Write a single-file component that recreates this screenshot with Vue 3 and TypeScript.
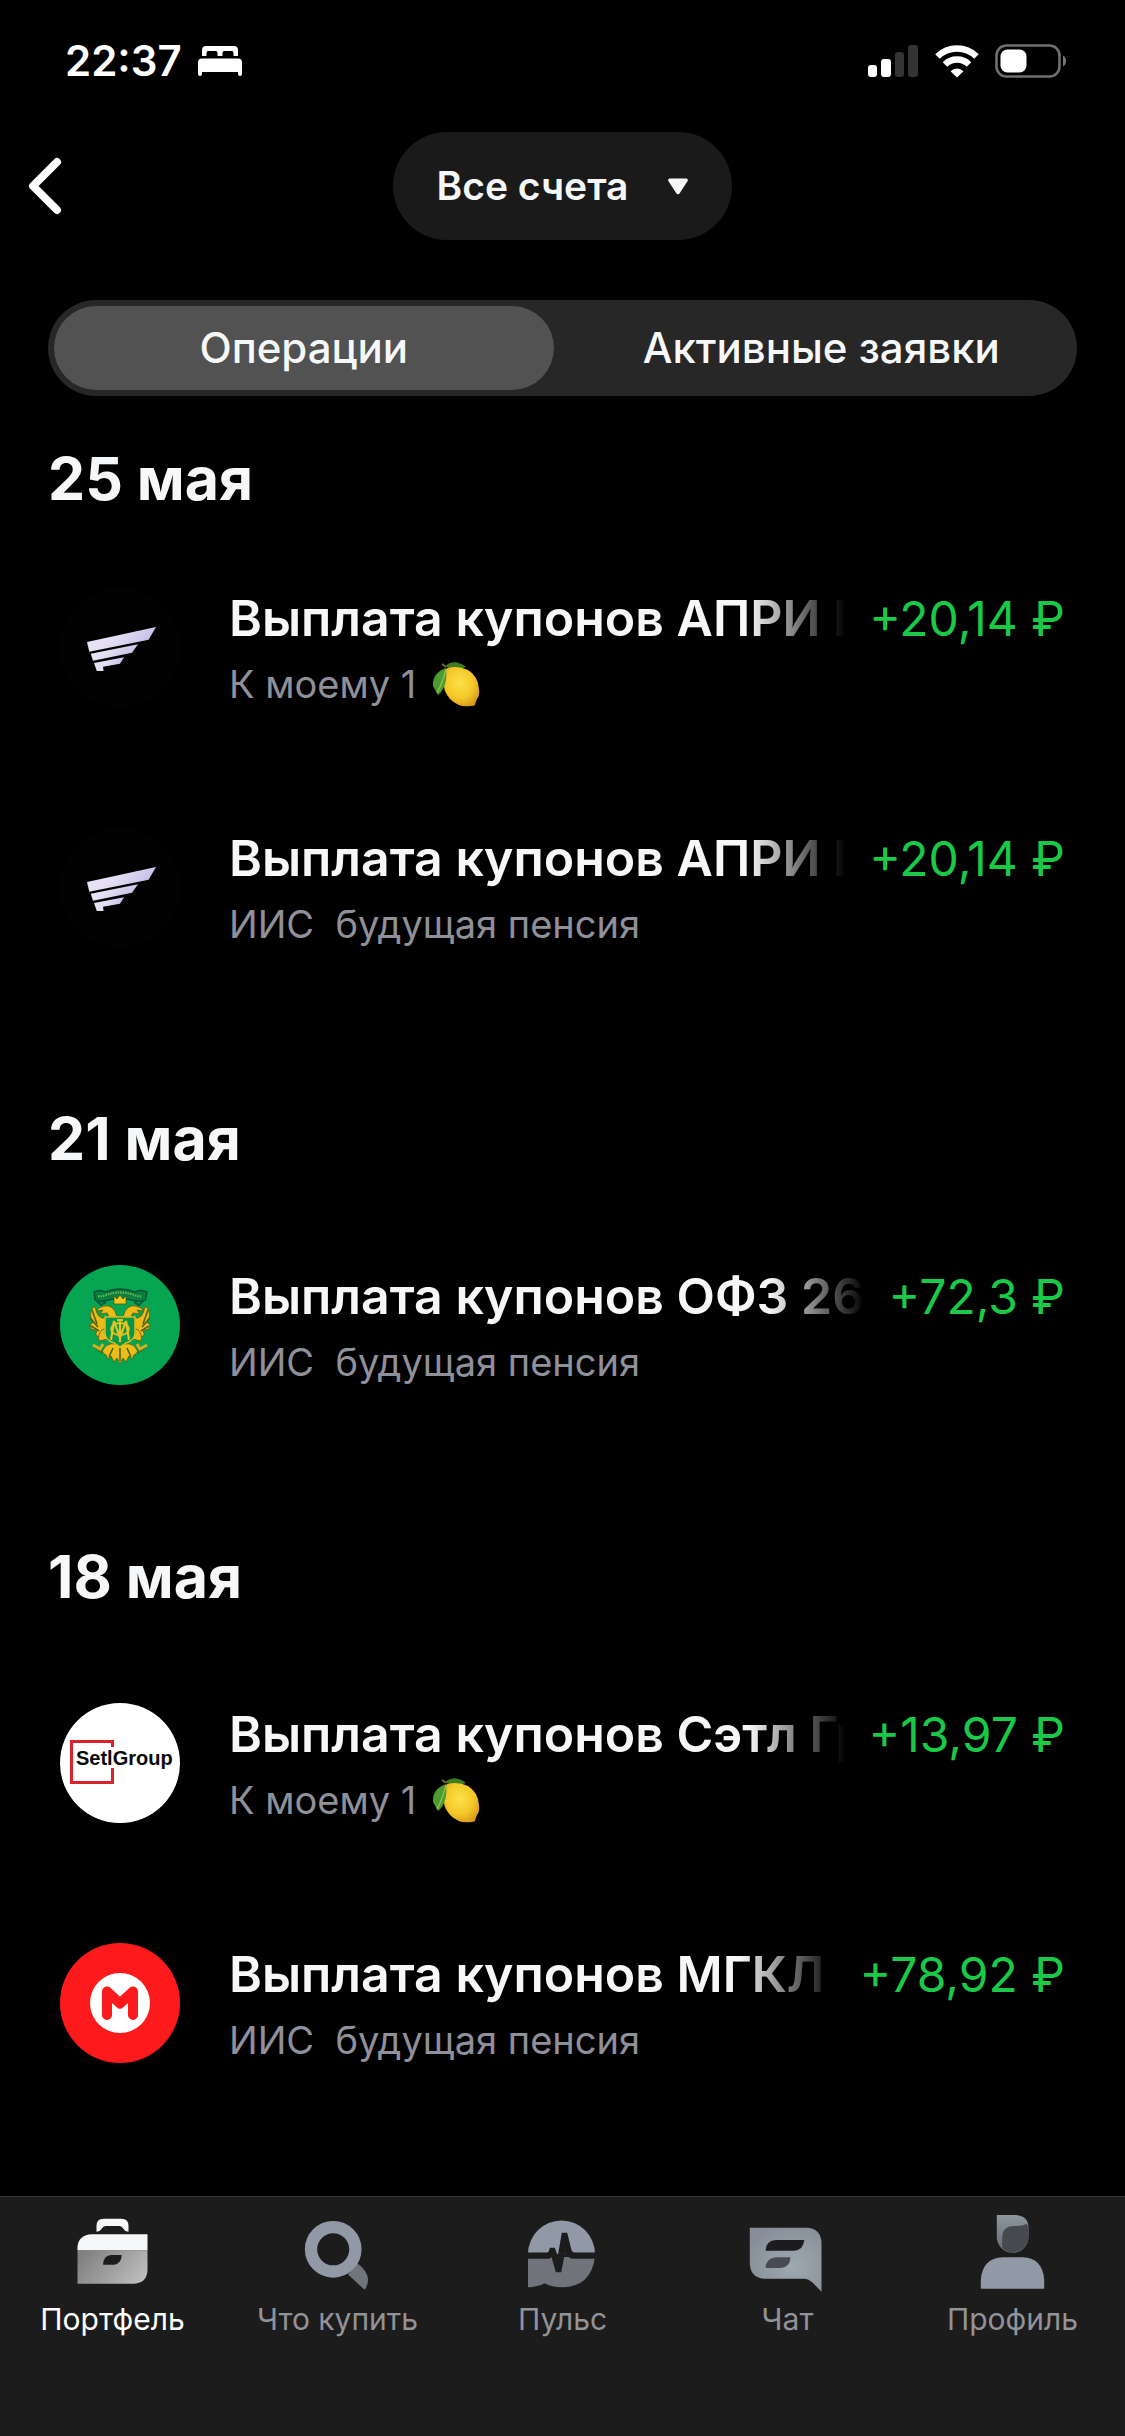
<script setup lang="ts">
import { ref } from 'vue'

type Logo = 'apri' | 'ofz' | 'setl' | 'mgkl'

interface Operation {
  id: number
  logo: Logo
  title: string
  account: string
  lemon?: boolean
  amount: string
}

interface Day {
  date: string
  operations: Operation[]
}

const days: Day[] = [
  {
    date: '25 мая',
    operations: [
      { id: 1, logo: 'apri', title: 'Выплата купонов АПРИ Б', account: 'К моему 1', lemon: true, amount: '+20,14 ₽' },
      { id: 2, logo: 'apri', title: 'Выплата купонов АПРИ Б', account: 'ИИС  будущая пенсия', amount: '+20,14 ₽' },
    ],
  },
  {
    date: '21 мая',
    operations: [
      { id: 3, logo: 'ofz', title: 'Выплата купонов ОФЗ 26', account: 'ИИС  будущая пенсия', amount: '+72,3 ₽' },
    ],
  },
  {
    date: '18 мая',
    operations: [
      { id: 4, logo: 'setl', title: 'Выплата купонов Сэтл Гр', account: 'К моему 1', lemon: true, amount: '+13,97 ₽' },
      { id: 5, logo: 'mgkl', title: 'Выплата купонов МГКЛ 0', account: 'ИИС  будущая пенсия', amount: '+78,92 ₽' },
    ],
  },
]

const views = ['Операции', 'Активные заявки']
const activeView = ref(views[0])

const tabs = [
  { id: 'portfolio', label: 'Портфель' },
  { id: 'buy', label: 'Что купить' },
  { id: 'pulse', label: 'Пульс' },
  { id: 'chat', label: 'Чат' },
  { id: 'profile', label: 'Профиль' },
]
const activeTab = ref('portfolio')
</script>

<template>
  <div class="screen">
    <div class="status">
      <div class="status-left">
        <span class="clock">22:37</span>
        <svg class="bed" width="44" height="32" viewBox="0 0 44 32" aria-hidden="true">
          <path fill="#fff" d="M4 11V5a4 4 0 0 1 4-4H36a4 4 0 0 1 4 4v6h-4.500V8a2 2 0 0 0-2-2h-7a2 2 0 0 0-2 2v3h-5V8a2 2 0 0 0-2-2h-7a2 2 0 0 0-2 2v3z" />
          <path fill="#fff" d="M4 13.500H40a4 4 0 0 1 4 4V29a2 2 0 0 1-4 0V27H4v2a2 2 0 0 1-4 0V17.500a4 4 0 0 1 4-4z" />
        </svg>
      </div>
      <div class="status-right">
        <svg width="52" height="34" viewBox="0 0 52 34" aria-hidden="true">
          <rect x="1" y="21" width="9" height="12" rx="3" fill="#fff" />
          <rect x="14" y="15" width="10" height="18" rx="3" fill="#fff" />
          <rect x="28" y="8" width="9" height="25" rx="3" fill="#343434" />
          <rect x="41" y="1" width="10" height="32" rx="3" fill="#343434" />
        </svg>
        <svg width="44" height="34" viewBox="0 0 44 34" aria-hidden="true">
          <g fill="none" stroke="#fff" stroke-width="6.500">
            <path d="M2.500 12.500a28 28 0 0 1 39 0" />
            <path d="M10 20.500a17 17 0 0 1 24 0" />
          </g>
          <path fill="#fff" d="M22 33.500l-6.500-6.300a9 9 0 0 1 13 0z" />
        </svg>
        <svg width="72" height="34" viewBox="0 0 72 34" aria-hidden="true">
          <rect x="1.500" y="1.500" width="63" height="31" rx="10" fill="none" stroke="#6f6f6f" stroke-width="2.600" />
          <rect x="5.500" y="5.500" width="26" height="23" rx="7" fill="#fff" />
          <path fill="#777" d="M68 11.500a6.500 6.500 0 0 1 0 11z" />
        </svg>
      </div>
    </div>

    <header class="top">
      <button class="back" type="button" aria-label="Назад">
        <svg width="34" height="58" viewBox="0 0 34 58" aria-hidden="true">
          <path d="M29 5L5 29l24 24" fill="none" stroke="#fff" stroke-width="8" stroke-linecap="round" stroke-linejoin="round" />
        </svg>
      </button>
      <button class="account-picker" type="button" aria-haspopup="listbox">
        <span>Все счета</span>
        <svg width="20" height="17" viewBox="0 0 20 17" aria-hidden="true">
          <path fill="#f6f7f8" d="M2 0.500H18a1.700 1.700 0 0 1 1.500 2.700L11.500 15.500a1.800 1.800 0 0 1-3 0L0.500 3.200A1.700 1.700 0 0 1 2 0.500z" />
        </svg>
      </button>
    </header>

    <div class="segments" role="tablist">
      <button
        v-for="view in views"
        :key="view"
        class="segment"
        :class="{ active: view === activeView }"
        type="button"
        role="tab"
        :aria-selected="view === activeView"
        @click="activeView = view"
      >{{ view }}</button>
    </div>

    <main class="feed">
      <section v-for="day in days" :key="day.date" class="day">
        <h2>{{ day.date }}</h2>
        <ul>
          <li v-for="op in day.operations" :key="op.id" class="operation">
            <svg class="logo" width="120" height="120" viewBox="0 0 120 120" aria-hidden="true">
              <template v-if="op.logo === 'apri'">
                <defs>
                  <linearGradient :id="'wing' + op.id" x1="0" y1="0" x2="1" y2=".35">
                    <stop offset="0" stop-color="#eee9f6" />
                    <stop offset=".5" stop-color="#e3def2" />
                    <stop offset="1" stop-color="#c5bfe8" />
                  </linearGradient>
                </defs>
                <circle cx="60" cy="60" r="60" fill="#020202" />
                <g :fill="'url(#wing' + op.id + ')'">
                  <path d="M27 55L96 40 88.600 52.700 29.300 64.700z" />
                  <path d="M30.700 66.700L78 57.300 72 65.700 33 73.700z" />
                  <path d="M34 76L64 70.300 60 76.700 43 79.700 43.600 84H36.800z" />
                </g>
              </template>
              <template v-else-if="op.logo === 'ofz'">
                <circle cx="60" cy="60" r="60" fill="#05a551" />
                <path d="M34 27q6-3 11 0 15-6 30 0 5-3 12 0l-1.500 8q-5 2-10.500 1-15-5-30 0-5 1-10-1z" fill="#07803f" stroke="#064f35" stroke-width="1.300" />
                <path d="M38 31q4 1 8-1 14-5 28 0 4 2 8 1" fill="none" stroke="#73b84a" stroke-width="2" stroke-dasharray="1.500 1" />
                <path d="M36 35l5 5 5-3M84 35l-5 5-5-3" fill="none" stroke="#075d3b" stroke-width="2" />
                <g stroke="#5a5a12" stroke-width=".8">
                  <path d="M54 31l3 3 3-4 3 4 3-3v8H54z" fill="#f2c51b" />
                  <path d="M57 52q-3-13-13-11-5 1-8 5l7-1-3 4 7-1q3 3 1 7zM63 52q3-13 13-11 5 1 8 5l-7-1 3 4-7-1q-3 3-1 7z" fill="#edbb18" />
                  <path d="M46 53q-9 2-11-12-6 5-4 12l3 4q-6 2-3 7l6 2q-3 4 2 6l7-1 2-8zM74 53q9 2 11-12 6 5 4 12l-3 4q6 2 3 7l-6 2q3 4-2 6l-7-1-2-8z" fill="#edbb18" />
                  <path d="M43 64q-6 5-4 12l9-2 2-5zM77 64q6 5 4 12l-9-2-2-5z" fill="#e9b91b" />
                  <path d="M56 79q-10-2-14 8l4 3 2 4 3-3 3 6 3-4 3 6 3-6 3 4 3-6 3 3 2-4 4-3q-4-10-14-8z" fill="#edbe1a" />
                </g>
                <path d="M32 45l5 14M30 53l8 9M31 61l8 5M88 45l-5 14M90 53l-8 9M89 61l-8 5M60 83v13M53 83l-4 9M67 83l4 9M34 82l9 6M86 82l-9 6" fill="none" stroke="#4f6518" stroke-width="1.600" />
                <path d="M33 80l7 4 3-5M87 80l-7 4-3-5" fill="none" stroke="#d3b01e" stroke-width="3" />
                <path d="M45 52H75V68q0 7-9 10l-6 4-6-4q-9-3-9-10z" fill="#05984b" stroke="#d7bc20" stroke-width="1.500" />
                <path d="M51 75l3-19 6 17 6-17 3 19M60 55v22M57 55h6" fill="none" stroke="#e5c321" stroke-width="2.200" />
                <ellipse cx="60" cy="64" rx="9" ry="6" fill="none" stroke="#e5c321" stroke-width="1.800" />
              </template>
              <template v-else-if="op.logo === 'setl'">
                <circle cx="60" cy="60" r="60" fill="#fff" />
                <path d="M52.500 44V38.500H11.500V79.500H52.500V65" fill="none" stroke="#d9222c" stroke-width="3" />
                <text x="16" y="62" class="setl-name">SetlGroup</text>
              </template>
              <template v-else>
                <circle cx="60" cy="60" r="60" fill="#fd1a1c" />
                <circle cx="60" cy="60" r="30" fill="#fff" />
                <path d="M47 72V48.500L60 60.500 73 48.500V72" fill="none" stroke="#fd1a1c" stroke-width="10" stroke-linecap="round" stroke-linejoin="round" />
              </template>
            </svg>
            <div class="details">
              <div class="main-line">
                <span class="title">{{ op.title }}</span>
                <span class="amount">{{ op.amount }}</span>
              </div>
              <div class="account">
                <span>{{ op.account }}</span>
                <svg v-if="op.lemon" width="48" height="48" viewBox="0 0 48 48" role="img" aria-label="Лимон">
                  <defs>
                    <radialGradient :id="'lemon' + op.id" cx=".45" cy=".4" r=".65">
                      <stop offset="0" stop-color="#fde14a" />
                      <stop offset=".6" stop-color="#f4c829" />
                      <stop offset="1" stop-color="#d99a1c" />
                    </radialGradient>
                  </defs>
                  <path d="M13 6.500Q22-2 34 7q-10 4-21-.5z" fill="#3f7d22" />
                  <path d="M15 8Q26 5 36 10 46 16 47 29q1 6-2 10-1 2-2 6-1 1-4 1-12 2-21-7-8-9-6-20 0-7 3-11z" :fill="'url(#lemon' + op.id + ')'" />
                  <path d="M14 8Q0 13 1 26l5 9Q16 27 14 8z" fill="#4d9a2e" />
                  <path d="M14 9Q11 22 5 33" fill="none" stroke="#8dc45c" stroke-width="1.200" />
                  <path d="M10 4l4 3" stroke="#6d6a35" stroke-width="2" />
                </svg>
              </div>
            </div>
          </li>
        </ul>
      </section>
    </main>

    <nav class="tabbar">
      <a
        v-for="tab in tabs"
        :key="tab.id"
        class="tab"
        :class="{ active: tab.id === activeTab }"
        :href="'#' + tab.id"
        @click="activeTab = tab.id"
      >
        <svg width="78" height="80" viewBox="0 0 78 80" aria-hidden="true">
          <template v-if="tab.id === 'portfolio'">
            <defs>
              <linearGradient id="case" x1="0" y1=".3" x2="1" y2=".7">
                <stop offset="0" stop-color="#808080" />
                <stop offset="1" stop-color="#bdbdbd" />
              </linearGradient>
            </defs>
            <path fill="#f6f7f8" d="M22.500 19.700V14q0-7.300 7-7.300h18q7 0 7 7.300v5.700q-3.500 0-5-2.700-1.500-3-4-3h-14q-2.500 0-4 3-1.500 2.700-5 2.700z" />
            <path fill="#f6f7f8" d="M3.500 38.500V35.500Q4 23 18 22.300H73.500V38.500z" />
            <path fill="url(#case)" d="M3.500 38.500H73.500V58Q73 71 60 71.700H3.500z" />
            <path fill="#1c1c1c" d="M29.200 52.700V51q1-7.500 8-8H47.500V45q-1 7-7.500 7.700z" />
          </template>
          <template v-else-if="tab.id === 'buy'">
            <path fill="#70757a" d="M58 51q11 8 11 17 0 6-3.500 9.700L49 62.500z" />
            <circle cx="34.200" cy="37.300" r="22.200" fill="none" stroke="#9299a6" stroke-width="12.300" />
          </template>
          <template v-else-if="tab.id === 'pulse'">
            <path fill="#9299a6" d="M4 42a33.500 33.500 0 0 1 67 0z" />
            <path fill="#70737a" d="M4 45H71Q67 75 38 75.300q-10 0-17.500-4Q14 75 4 75.300z" />
            <path fill="#1c1c1c" d="M2 40.500H23q2 0 2.800-4.800h5L33.800 44 37.800 20.700h5.400L47.200 37q.8 3.500 4 3.500H74v6.300H50q-6 0-9-5.800L37.200 60.300h-5.400L27.500 45q-.8 1.800-3 1.800H2z" />
          </template>
          <template v-else-if="tab.id === 'chat'">
            <defs>
              <radialGradient id="bubble" cx=".6" cy=".6" r=".7">
                <stop offset="0" stop-color="#9fa9b0" />
                <stop offset="1" stop-color="#868d98" />
              </radialGradient>
            </defs>
            <path fill="url(#bubble)" d="M.8 15.700H57Q72 16 72.500 31V79.700L64 71q-4.500-4.300-9-4.300H16Q1 66 .8 51z" />
            <path fill="#1c1c20" d="M16.500 38.700Q17 28.500 27 28H55.200Q54.500 38 45 38.700z" />
            <path fill="#484b52" d="M16.500 56Q17 46 27 45.300H41.500Q41 55 32 56z" />
          </template>
          <template v-else>
            <defs>
              <linearGradient id="hair" x1="0" y1="0" x2="0" y2="1">
                <stop offset="0" stop-color="#8d959e" />
                <stop offset="1" stop-color="#646b72" />
              </linearGradient>
            </defs>
            <path fill="url(#hair)" d="M22.800 3H42Q54.500 4 54.500 16v9a15.800 15.800 0 0 1-31.700 0z" />
            <path fill="#464a4e" d="M28.200 36V26q0-12 12-12 10 0 12.500-2.500 1.800 3 1.800 6v7.500A15.800 15.800 0 0 1 28.200 36z" />
            <path fill="#9299a6" d="M6.800 76.700V68q1.500-22 22-22.700h20q20 .7 21.400 22.700v8.700z" />
          </template>
        </svg>
        <span>{{ tab.label }}</span>
      </a>
    </nav>
  </div>
</template>

<style>
body {
  background: #000;
}
</style>

<style scoped>
.screen {
  box-sizing: border-box;
  min-height: 100vh;
  display: flex;
  flex-direction: column;
  background: #000;
  color: #f6f7f8;
  font-family: Inter, "Liberation Sans", sans-serif;
}

button {
  border: 0;
  padding: 0;
  background: none;
  color: inherit;
  font: inherit;
}

svg {
  display: block;
  flex: none;
}

.status {
  height: 122px;
  display: flex;
  align-items: center;
  justify-content: space-between;
  padding: 0 58px 0 65px;
  color: #fff;
}

.status-left,
.status-right {
  display: flex;
  align-items: center;
  gap: 16px;
}

.clock {
  font-size: 42px;
  line-height: 52px;
  font-weight: 600;
}

.top {
  display: grid;
  grid-template-columns: 1fr auto 1fr;
  align-items: center;
  margin-top: 10px;
}

.back {
  justify-self: start;
  padding-left: 28px;
}

.account-picker {
  grid-column: 2;
  height: 108px;
  display: flex;
  align-items: center;
  gap: 40px;
  padding: 0 44px;
  border-radius: 54px;
  background: #1a1a1a;
  font-size: 39px;
  line-height: 48px;
  font-weight: 600;
}

.segments {
  display: flex;
  gap: 18px;
  margin: 60px 48px 0;
  padding: 6px;
  border-radius: 48px;
  background: #272727;
}

.segment {
  flex: 1;
  height: 84px;
  border-radius: 42px;
  font-size: 42px;
  line-height: 48px;
  font-weight: 500;
}

.segment.active {
  background: #525252;
}

.feed {
  flex: 1;
}

.day h2 {
  box-sizing: border-box;
  height: 198px;
  display: flex;
  align-items: flex-end;
  margin: 0;
  padding: 0 48px 30px;
  font-size: 59px;
  line-height: 72px;
  font-weight: 700;
}

.day:first-child h2 {
  height: 131px;
  padding-bottom: 12px;
}

ul {
  margin: 0;
  padding: 0;
  list-style: none;
}

.operation {
  height: 240px;
  display: flex;
  align-items: center;
  gap: 49px;
  padding: 0 60px;
}

.details {
  flex: 1;
  min-width: 0;
  padding-top: 6px;
}

.main-line {
  display: flex;
  align-items: baseline;
  gap: 24px;
  font-size: 50px;
  line-height: 66px;
}

.title {
  flex: 1;
  min-width: 0;
  overflow: hidden;
  white-space: nowrap;
  font-weight: 600;
  -webkit-mask-image: linear-gradient(to left, transparent, #000 96px);
  mask-image: linear-gradient(to left, transparent, #000 96px);
}

.amount {
  color: #1ac948;
  font-size: 48px;
  white-space: nowrap;
}

.account {
  display: flex;
  align-items: center;
  gap: 16px;
  height: 64px;
  color: #8f9099;
  font-size: 38px;
  line-height: 64px;
  white-space: pre;
}

.setl-name {
  font-family: "Liberation Sans", sans-serif;
  font-size: 20px;
  font-weight: 700;
  fill: #0a0a0a;
}

.tabbar {
  display: flex;
  height: 240px;
  box-sizing: border-box;
  border-top: 1px solid #353535;
  background: #1c1c1c;
}

.tab {
  flex: 1;
  display: flex;
  flex-direction: column;
  align-items: center;
  gap: 9px;
  padding-top: 15px;
  color: #929298;
  font-size: 30px;
  line-height: 36px;
  text-decoration: none;
}

.tab.active {
  color: #fff;
}
</style>
